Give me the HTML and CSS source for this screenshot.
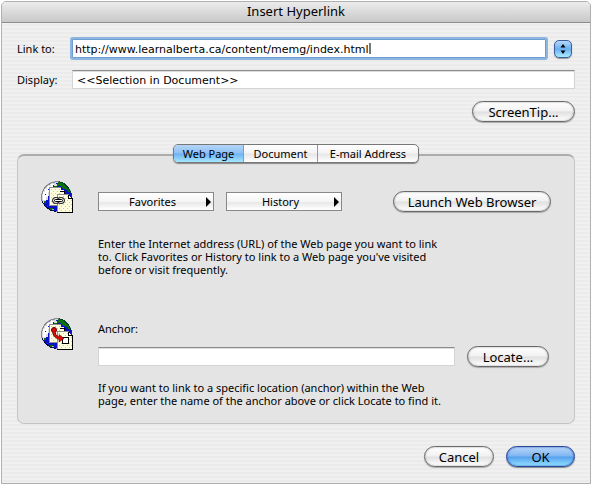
FILE: index.html
```html
<!DOCTYPE html>
<html lang="en">
<head>
<meta charset="utf-8">
<title>Insert Hyperlink</title>
<link rel="stylesheet" href="styles.css">
</head>
<body>
<svg class="defs" width="0" height="0" aria-hidden="true">
  <defs>
    <clipPath id="disc"><circle cx="15.500" cy="15.500" r="15"/></clipPath>
    <g id="globe">
      <g clip-path="url(#disc)">
        <rect width="32" height="32" fill="#0b10c8"/>
        <g shape-rendering="crispEdges">
          <path d="M0 0h18v3h-2v2H8v9l-1 2v3H5v3H0z" fill="#dcdcdc"/>
          <path d="M2 11h5v5H5v3H2zM6 5h6v2H8v4H4V8h2zM10 3h3v2h-3z" fill="#fff"/>
          <path d="M4 13h1v1H4zM7 8h1v1H7zM12 4h1v1h-1zM15 2h2v1h-2z" fill="#0b10c8"/>
          <path d="M17 1h5l4 2 3 4 1 4h-3l-2-3h-3l-2-3h-4V3h1z" fill="#08700e"/>
          <path d="M3 20h2v2H3zM9 27h3v2H9zM6 25h1v1H6zM13 5h3v1h-3z" fill="#08700e"/>
          <path d="M24 9h3v2h2v3h-4z" fill="#0b10c8"/>
          <path d="M11 28h2v1h-2z" fill="#aaa"/>
        </g>
      </g>
      <g fill="none" shape-rendering="crispEdges">
        <path d="M18 .500l5 2 4 4 3 5 .500 6" stroke="#083c28"/>
        <path d="M1 20l3 5 5 4 6 1.500" stroke="#08083c"/>
        <path d="M1 20C-1 10 5 1 18 .500" stroke="#888"/>
      </g>
    </g>
    <g id="sheets" fill="none" shape-rendering="crispEdges">
      <path d="M8 6h12v3h3v15H8z" fill="#ffffe0"/>
      <path d="M10 8.500h9M10 12.500h12M10 16.500h6M10 20.500h6" stroke="#ecd800" stroke-dasharray="1 3"/>
      <path d="M12 10.500h7M12 14.500h4M12 18.500h4M12 22.500h4" stroke="#ecd800" stroke-dasharray="1 3"/>
      <path d="M8.500 24.500V6.500H20M8 24.500h8" stroke="#8d8d8d"/>
      <path d="M19 10.500h5M23.500 10v3" stroke="#000"/>
      <path d="M16 14h11l5 4v13H16z" fill="#ffffe0"/>
      <path d="M18 15.500h9M18 19.500h13M18 23.500h13M18 27.500h13" stroke="#ecd800" stroke-dasharray="1 3"/>
      <path d="M20 17.500h7M20 21.500h11M20 25.500h11M20 29.500h11" stroke="#ecd800" stroke-dasharray="1 3"/>
      <path d="M16.500 31V13.500H28" stroke="#8d8d8d"/>
      <path d="M27.500 13.500v4h4v14H16" stroke="#000"/>
    </g>
  </defs>
</svg>

<main class="window">
  <header class="titlebar"><h1>Insert Hyperlink</h1></header>
  <form class="content">
    <div class="row">
      <label class="label" for="link">Link to:</label>
      <div class="combo">
        <input class="field focused" id="link" type="text" value="http://www.learnalberta.ca/content/memg/index.html">
        <span class="caret"></span>
      </div>
      <button class="stepper" type="button" aria-label="Recent links">
        <svg width="18" height="18" viewBox="0 0 18 18"><path d="M9 4l2.500 3.500h-5zM9 14l2.500-3.500h-5z"/></svg>
      </button>
    </div>
    <div class="row display-row">
      <label class="label" for="display">Display:</label>
      <input class="field" id="display" type="text" value="&lt;&lt;Selection in Document&gt;&gt;">
    </div>
    <div class="actions"><button class="pill tip" type="button">ScreenTip...</button></div>

    <section class="panel">
      <div class="tabs" role="tablist">
        <button class="tab selected" type="button" role="tab" aria-selected="true">Web Page</button>
        <button class="tab" type="button" role="tab" aria-selected="false">Document</button>
        <button class="tab" type="button" role="tab" aria-selected="false">E-mail Address</button>
      </div>
      <div class="group">
        <svg class="icon" width="32" height="32" viewBox="0 0 32 32" aria-hidden="true">
          <use href="#globe"/><use href="#sheets"/>
          <g fill="none">
            <rect x="11.500" y="16.500" width="7" height="6" rx="3" stroke="#000" fill="#ddd"/>
            <rect x="16.500" y="16.500" width="7" height="6" rx="3" stroke="#000" fill="#ddd"/>
            <rect x="13.500" y="18.500" width="8" height="2" rx="1" stroke="#000" fill="#fff"/>
          </g>
        </svg>
        <div class="details">
          <div class="line">
            <button class="menu" type="button"><span>Favorites</span><svg width="5" height="10" viewBox="0 0 5 10"><path d="M0 0l5 5-5 5z"/></svg></button>
            <button class="menu" type="button"><span>History</span><svg width="5" height="10" viewBox="0 0 5 10"><path d="M0 0l5 5-5 5z"/></svg></button>
            <button class="pill launch" type="button">Launch Web Browser</button>
          </div>
          <p class="help">Enter the Internet address (URL) of the Web page you want to link<br>to. Click Favorites or History to link to a Web page you've visited<br>before or visit frequently.</p>
        </div>
      </div>
      <div class="group anchor-group">
        <svg class="icon" width="32" height="32" viewBox="0 0 32 32" aria-hidden="true">
          <use href="#globe"/><use href="#sheets"/>
          <path d="M21.500 19.500h6v6h-6z" fill="#fff" stroke="#000" shape-rendering="crispEdges"/>
          <path d="M13 12c-1 4 2 8 7 8.500" fill="none" stroke="#300" stroke-width="3"/>
          <circle cx="13" cy="12" r="2.500" fill="#e00808" stroke="#500"/>
          <path d="M18 16.500l5 4-5 3.500z" fill="#e00808" stroke="#400" stroke-width=".5"/>
          <path d="M13 12c-1 4 2 8 7 8.500" fill="none" stroke="#e00808" stroke-width="2"/>
        </svg>
        <div class="details">
          <label class="anchor-label" for="anchor">Anchor:</label>
          <div class="line anchor-line">
            <input class="field" id="anchor" type="text">
            <button class="pill locate" type="button">Locate...</button>
          </div>
          <p class="help anchor-help">If you want to link to a specific location (anchor) within the Web<br>page, enter the name of the anchor above or click Locate to find it.</p>
        </div>
      </div>
    </section>

    <footer class="actions footer">
      <button class="pill cancel" type="button">Cancel</button>
      <button class="pill ok" type="submit">OK</button>
    </footer>
  </form>
</main>
</body>
</html>
```

FILE: styles.css
```css
* {
  box-sizing: border-box;
}

body {
  margin: 0;
  padding: 1px 1px 0;
  background: #fff;
  color: #000;
  font: 11px/13px "Noto Sans", "Open Sans", sans-serif;
}

button,
input {
  margin: 0;
  padding: 0;
  color: inherit;
  font: inherit;
}

.defs {
  position: absolute;
}

.window {
  border: 1px solid #b0b0b0;
  border-radius: 5px 5px 0 0;
  background: repeating-linear-gradient(#f0f0f0 0 2px, #ebebeb 2px 4px);
  overflow: hidden;
}

.titlebar {
  height: 21px;
  border-bottom: 1px solid #8c8c8c;
  background: linear-gradient(#ececec, #c8c8c8);
}

h1 {
  margin: 0;
  font-size: 13px;
  font-weight: 400;
  line-height: 19px;
  text-align: center;
}

.content {
  padding: 16px 15px;
}

.row,
.line {
  display: flex;
  align-items: center;
}

.label {
  flex: 0 0 55px;
}

.combo {
  position: relative;
  flex: 1;
}

.field {
  display: block;
  flex: 1;
  width: 100%;
  min-width: 0;
  height: 19px;
  padding: 2px 4px 0;
  border: 1px solid #d4d4d4;
  border-top-color: #8c8c8c;
  background: #fff;
  box-shadow: inset 0 1px 0 #ddd;
  outline: 0;
  font-family: "DejaVu Sans", sans-serif;
}

.field.focused {
  padding: 1px 2px 0;
  border: 1px solid #6f9fd2;
  box-shadow: 0 0 0 2px #8db5e0;
  border-radius: 1px;
}

.caret {
  position: absolute;
  top: 4px;
  left: 297px;
  width: 2px;
  height: 11px;
  background: #777;
}

.stepper {
  width: 18px;
  height: 18px;
  margin: 0 3px 0 8px;
  border: 1px solid #3a5f9f;
  border-radius: 5px;
  background: linear-gradient(#b7d7fa, #68aef2 50%, #a8ecff);
  box-shadow: 0 1px 1px #999;
}

.stepper svg {
  display: block;
  margin: -1px;
}

.display-row {
  margin-top: 12px;
}

.actions {
  display: flex;
  justify-content: flex-end;
  gap: 12px;
  margin-top: 12px;
}

.pill {
  height: 21px;
  border: 1px solid #696969;
  border-radius: 11px;
  background: linear-gradient(#fff, #f1f1f1 48%, #e0e0e0 52%, #fff);
  box-shadow: inset 0 0 2px #999, 0 1px 1px #aaa;
  font-size: 13px;
  line-height: 18px;
  white-space: nowrap;
}

.tip {
  width: 103px;
}

.panel {
  margin-top: 32px;
  padding: 0 23px 16px;
  border: 1px solid #c4c4c4;
  border-top: 2px solid #acacac;
  border-radius: 7px;
  background: #e4e4e4;
}

.tabs {
  position: relative;
  display: flex;
  width: 246px;
  margin: -12px auto 0;
  border: 1px solid #777;
  border-radius: 5px;
  background: linear-gradient(#fff, #f3f3f3 48%, #e6e6e6 52%, #fff);
  box-shadow: 0 1px 1px #888;
  overflow: hidden;
}

.tab {
  flex: 0 0 74px;
  height: 17px;
  border: 0;
  border-left: 1px solid #999;
  background: none;
  white-space: nowrap;
}

.tab:last-child {
  flex: 1;
}

.tab.selected {
  flex: 0 0 69px;
  border-left: 0;
  background: linear-gradient(#b4d5f8, #8ec0f5 48%, #6cb2f3 52%, #a5e6ff);
}

.group {
  display: flex;
  gap: 25px;
  margin-top: 18px;
}

.icon {
  flex: none;
}

.details {
  flex: 1;
  padding-top: 10px;
}

.menu {
  display: flex;
  align-items: center;
  width: 116px;
  height: 19px;
  margin-right: 12px;
  padding-right: 2px;
  border: 1px solid #888;
  background: linear-gradient(#fff, #f5f5f5 50%, #e8e8e8 55%, #fff);
}

.menu span {
  flex: 1;
}

.launch {
  width: 158px;
  margin-left: auto;
}

.help {
  margin: 25px 0 0;
  white-space: nowrap;
}

.anchor-group {
  margin-top: 42px;
}

.anchor-group .details {
  padding-top: 4px;
}

.anchor-label {
  display: block;
}

.anchor-line {
  gap: 12px;
  margin: 11px 2px 0 0;
}

.anchor-help {
  margin-top: 14px;
}

.locate {
  width: 82px;
}

.footer {
  margin-top: 22px;
}

.cancel {
  width: 70px;
}

.ok {
  width: 69px;
  border-color: #26469c;
  background: linear-gradient(#b9d6f8, #7fb5f2 48%, #559fee 52%, #93e2ff);
  box-shadow: inset 0 0 2px #1f4cae, 0 1px 1px #888;
}
```
